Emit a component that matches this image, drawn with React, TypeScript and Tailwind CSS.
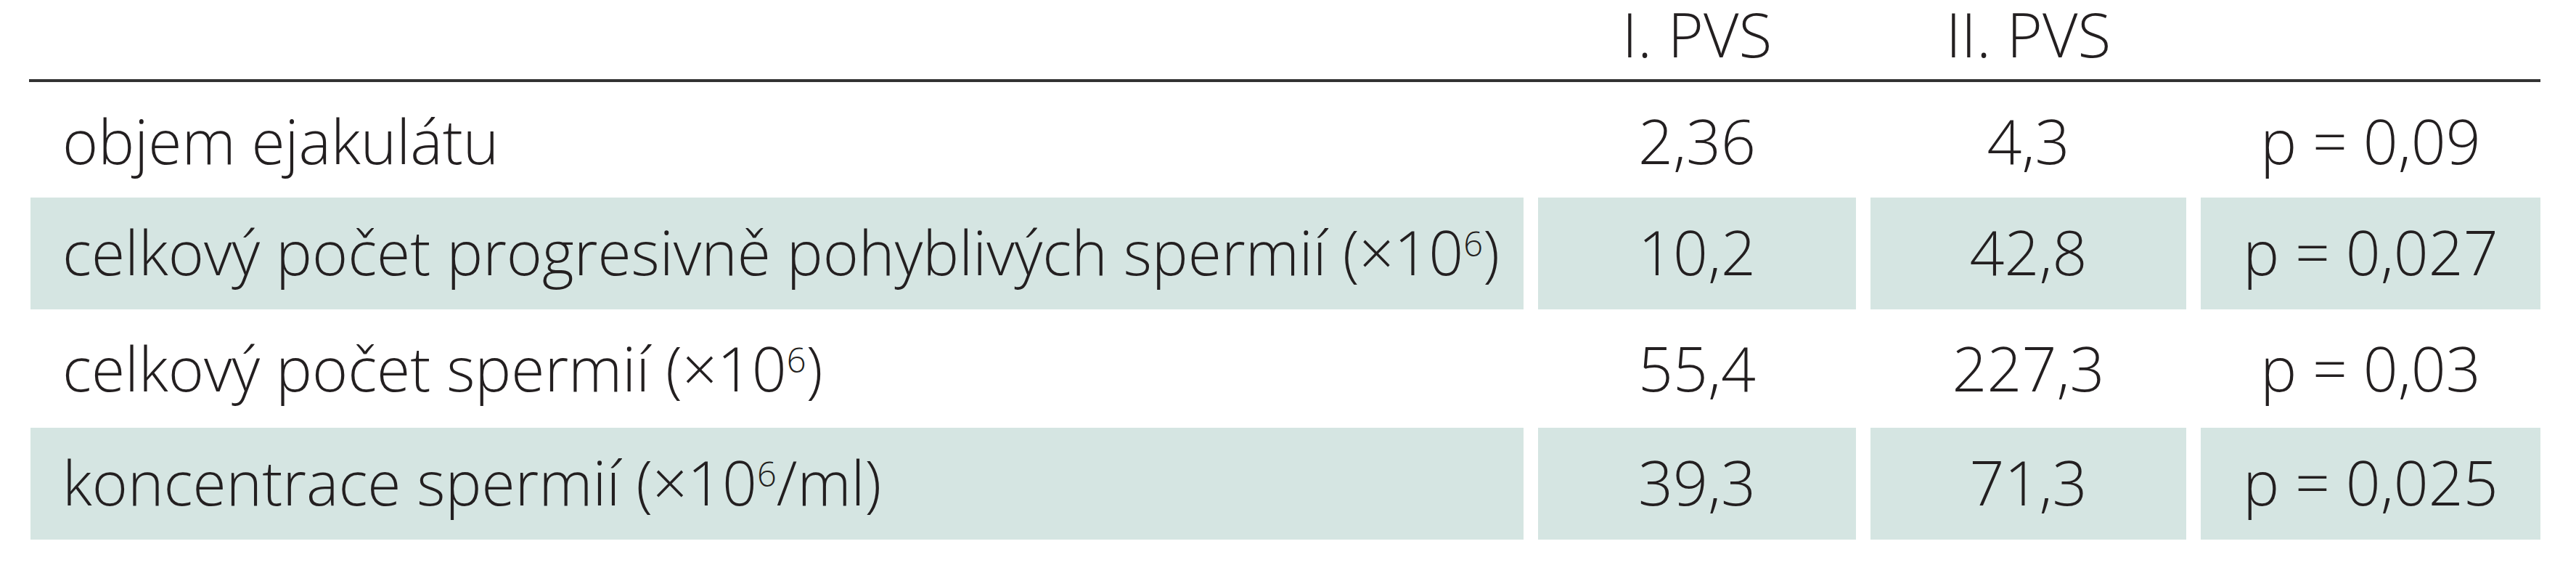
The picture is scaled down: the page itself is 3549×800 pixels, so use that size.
const rows = [
  { label: <>objem ejakulátu</>, a: "2,36", b: "4,3", p: "p = 0,09", shaded: false, h: "h-[159px]" },
  {
    label: (
      <>
        celkový počet progresivně pohyblivých spermií (×10<Sup>6</Sup>)
      </>
    ),
    a: "10,2",
    b: "42,8",
    p: "p = 0,027",
    shaded: true,
    h: "h-[154px]",
  },
  {
    label: (
      <>
        celkový počet spermií (×10<Sup>6</Sup>)
      </>
    ),
    a: "55,4",
    b: "227,3",
    p: "p = 0,03",
    shaded: false,
    h: "h-[163px]",
  },
  {
    label: (
      <>
        koncentrace spermií (×10<Sup>6</Sup>/ml)
      </>
    ),
    a: "39,3",
    b: "71,3",
    p: "p = 0,025",
    shaded: true,
    h: "h-[154px]",
  },
];

function Sup({ children }: { children: React.ReactNode }) {
  return <span className="text-[47px] align-[26px] leading-none">{children}</span>;
}

function Cell({
  children,
  shaded,
  h,
  className = "",
}: {
  children: React.ReactNode;
  shaded: boolean;
  h: string;
  className?: string;
}) {
  return (
    <div className={`${h} ${shaded ? "bg-[#d5e5e2] pt-[33px]" : "pt-[39px]"} whitespace-nowrap ${className}`}>
      {children}
    </div>
  );
}

export default function App() {
  return (
    <div
      className="w-[3549px] h-[800px] bg-white text-[#231f20] text-[84px] leading-none font-light"
      style={{ fontFamily: '"Open Sans", "Liberation Sans", sans-serif' }}
    >
      <div className="w-[3460px] ml-[40px]">
        <div className="grid grid-cols-[2059px_438px_435px_468px] gap-x-[20px] h-[109px] leading-[94px]">
          <div />
          <div className="text-center">I. PVS</div>
          <div className="text-center">II. PVS</div>
          <div />
        </div>
        <div className="h-[4px] bg-[#333333]" />
        <div className="flex flex-col">
          {rows.map((r, i) => (
            <div key={i} className="grid grid-cols-[2059px_438px_435px_468px] gap-x-[20px]">
              <Cell shaded={r.shaded} h={r.h} className="pl-[44px] ml-[2px]">
                {r.label}
              </Cell>
              <Cell shaded={r.shaded} h={r.h} className="text-center">
                {r.a}
              </Cell>
              <Cell shaded={r.shaded} h={r.h} className="text-center">
                {r.b}
              </Cell>
              <Cell shaded={r.shaded} h={r.h} className="text-center">
                {r.p}
              </Cell>
            </div>
          ))}
        </div>
      </div>
    </div>
  );
}
